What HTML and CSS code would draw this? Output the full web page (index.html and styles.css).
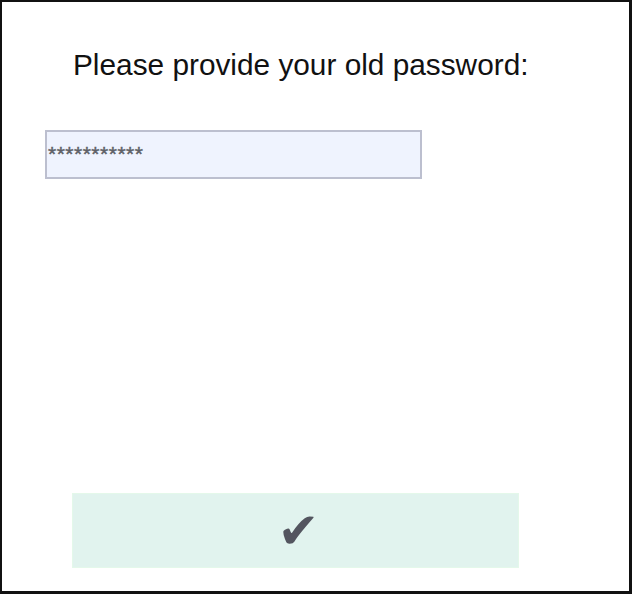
FILE: index.html
```html
<!DOCTYPE html>
<html>
<head>
<meta charset="utf-8">
<link rel="stylesheet" href="styles.css">
</head>
<body>
<div class="frame">
  <h1 class="prompt">Please provide your old password:</h1>
  <div class="field"><span class="stars">***********</span></div>
  <button class="confirm" type="button"><span class="tick">✔</span></button>
</div>
</body>
</html>
```
FILE: styles.css
```css
html, body {
  margin: 0;
  padding: 0;
  background: #ffffff;
}
.frame {
  box-sizing: border-box;
  width: 632px;
  height: 594px;
  border-style: solid;
  border-color: #111111;
  border-width: 2px 3px 3px 2px;
  display: flex;
  flex-direction: column;
  font-family: "Liberation Sans", Arial, sans-serif;
}
.prompt {
  margin: 46px 0 0 71px;
  font-size: 29.8px;
  font-weight: normal;
  line-height: 34px;
  color: #111111;
}
.field {
  box-sizing: border-box;
  margin: 48px 0 0 43px;
  width: 377px;
  height: 49px;
  border: 2px solid #bcbfcf;
  background: #eff3fe;
  padding: 11px 0 0 1px;
  line-height: 21px;
}
.stars {
  font-size: 21px;
  color: #5d5f66;
  letter-spacing: 0.5px;
  -webkit-text-stroke: 0.4px #5d5f66;
}
.confirm {
  box-sizing: border-box;
  margin: auto 0 23px 70px;
  width: 447px;
  height: 75px;
  border: 1px solid #e4f8ea;
  background: #e1f3ee;
  display: flex;
  align-items: center;
  justify-content: center;
  padding: 0 0 0 6px;
}
.tick {
  font-family: "DejaVu Sans", sans-serif;
  font-size: 50px;
  color: #53555f;
  line-height: 1;
}
```
